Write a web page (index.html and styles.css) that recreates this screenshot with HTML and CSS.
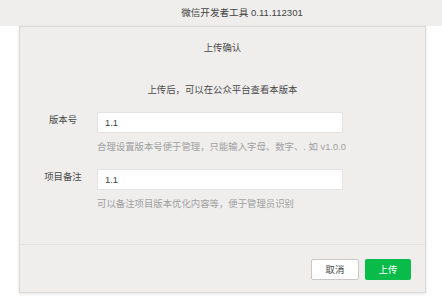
FILE: index.html
```html
<!DOCTYPE html>
<html lang="zh">
<head>
<meta charset="utf-8">
<link rel="stylesheet" href="styles.css">
</head>
<body>
<div class="topbar">微信开发者工具 0.11.112301</div>
<div class="dialog">
  <div class="body">
    <div class="title">上传确认</div>
    <div class="subtitle">上传后，可以在公众平台查看本版本</div>
    <div class="row">
      <div class="label">版本号</div>
      <div class="field">
        <div class="input">1.1</div>
        <div class="hint">合理设置版本号便于管理，只能输入字母、数字、. 如 v1.0.0</div>
      </div>
    </div>
    <div class="row">
      <div class="label">项目备注</div>
      <div class="field">
        <div class="input">1.1</div>
        <div class="hint">可以备注项目版本优化内容等，便于管理员识别</div>
      </div>
    </div>
  </div>
  <div class="footer">
    <div class="btn cancel">取消</div>
    <div class="btn primary">上传</div>
  </div>
</div>
</body>
</html>
```

FILE: styles.css
```css
html, body {
  margin: 0;
  padding: 0;
  background: #ffffff;
}
body {
  width: 442px;
  height: 300px;
  overflow: hidden;
  font-family: "Liberation Sans", "Noto Sans CJK SC", sans-serif;
  font-size: 9.4px;
  color: #4a4a4a;
}
.topbar {
  height: 26px;
  line-height: 26px;
  background: #efeeed;
  text-align: center;
  padding-left: 42px;
  color: #444;
  font-size: 9.6px;
}
.dialog {
  margin-left: 19px;
  width: 405px;
  height: 265px;
  border: 1px solid #d9d9d9;
  background: #efeeed;
  box-shadow: 0 1px 3px rgba(0, 0, 0, 0.12);
  display: flex;
  flex-direction: column;
}
.body {
  flex: 1;
  padding: 14px 9px 0 9px;
  border-bottom: 1px solid #e2e1e0;
}
.title {
  text-align: center;
  line-height: 14px;
}
.subtitle {
  text-align: center;
  line-height: 14px;
  margin-top: 28px;
}
.row {
  display: flex;
  margin-top: 15px;
}
.label {
  width: 68px;
  text-align: center;
  line-height: 14px;
  padding-top: 1px;
}
.field {
  display: flex;
  flex-direction: column;
}
.input {
  width: 234px;
  height: 19px;
  line-height: 19px;
  padding: 0 3px 0 7px;
  background: #ffffff;
  border: 1px solid #e3e3e3;
  color: #444;
}
.hint {
  margin-top: 7px;
  line-height: 14px;
  color: #a0a0a0;
}
.footer {
  height: 47px;
  display: flex;
  justify-content: flex-end;
  align-items: flex-start;
  padding: 14px 14px 0 0;
  box-sizing: border-box;
  gap: 6px;
}
.btn {
  height: 21px;
  line-height: 21px;
  text-align: center;
  box-sizing: border-box;
  border-radius: 2px;
}
.cancel {
  width: 48px;
  background: #ffffff;
  border: 1px solid #c8c8c8;
  line-height: 19px;
  color: #444;
}
.primary {
  width: 46px;
  background: #09bb49;
  color: #ffffff;
}
```
